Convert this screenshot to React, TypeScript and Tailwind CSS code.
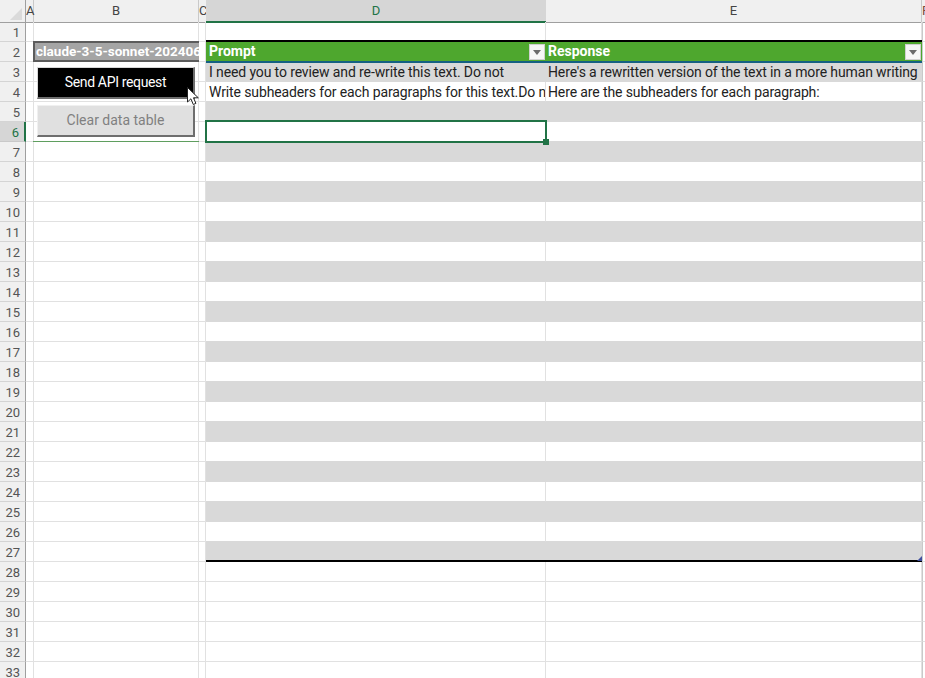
import React from 'react';

const ROW_COUNT = 33;
const FONT = "font-['Roboto',sans-serif]";
const COLS = 'grid grid-cols-[26px_8px_165px_7px_340px_376px_3px]';

const CELL_TEXT: Record<number, [string, string]> = {
  3: ['I need you to review and re-write this text. Do not', "Here's a rewritten version of the text in a more human writing"],
  4: ['Write subheaders for each paragraphs for this text.Do not add anything else', 'Here are the subheaders for each paragraph:'],
};

const FilterButton: React.FC = () => (
  <span className="absolute right-[1px] top-[2px] flex h-[16px] w-[16px] items-center justify-center border border-[#d0d0d0] bg-[#f6f6f6]">
    <svg width="8" height="5" viewBox="0 0 8 5">
      <path d="M0 0h8L4 5z" fill="#6a6a6a" />
    </svg>
  </span>
);

const ColumnHeader: React.FC = () => (
  <div className={`${COLS} h-[22px] bg-[#f0f0f0] text-[13px] leading-[21px] text-[#444]`}>
    <div className="relative border-r border-b border-[#9f9f9f]">
      <svg className="absolute left-[10px] top-[8px]" width="12" height="12" viewBox="0 0 12 12">
        <path d="M12 0v12H0z" fill="#dadada" />
      </svg>
    </div>
    <div className="border-r border-b border-[#c9c9c9] border-b-[#9f9f9f] text-center">A</div>
    <div className="border-r border-b border-[#c9c9c9] border-b-[#9f9f9f] text-center">B</div>
    <div className="border-b border-[#9f9f9f] text-center">C</div>
    <div className="border-b-2 border-[#217346] bg-[#d6d6d6] text-center text-[#217346]">D</div>
    <div className="border-r border-b border-[#c9c9c9] border-b-[#9f9f9f] text-center">E</div>
    <div className="overflow-hidden border-b border-[#9f9f9f] text-[#7b4a3a]">F</div>
  </div>
);

const Row: React.FC<{ n: number }> = ({ n }) => {
  const inTable = n >= 2 && n <= 27;
  const isHead = n === 2;
  const isStriped = inTable && !isHead && n % 2 === 1;
  const isLast = n === 27;
  const selected = n === 6;
  const plain = 'border-r border-b border-[#e1e1e1]';

  let tableCell = plain;
  if (isHead) {
    // one pixel taller than the row, the blue rule sits over the next row
    tableCell = 'relative h-[21px] border-b-2 border-[#156082] bg-[#4ea72e] shadow-[0_-2px_0_#000] text-[14px] leading-[19px] font-bold text-white';
  } else if (isLast) {
    tableCell = 'border-b-2 border-black bg-[#d9d9d9]';
  } else if (isStriped) {
    tableCell = 'border-b border-[#d9d9d9] bg-[#d9d9d9] leading-[21px] tracking-[-0.12px]';
  } else if (inTable) {
    tableCell = 'border-r border-b border-[#e1e1e1] border-b-[#d9d9d9] leading-[21px] tracking-[-0.12px]';
  }

  const text = CELL_TEXT[n];

  return (
    <div className={`${COLS} h-[20px] grid-rows-[20px] text-[14px] text-[#222]`}>
      <div
        className={`border-r border-b pr-[5px] text-right text-[13px] leading-[21px] ${
          selected
            ? 'border-r-2 border-r-[#217346] border-b-[#c9c9c9] bg-[#d6d6d6] text-[#217346]'
            : 'border-r-[#9f9f9f] border-b-[#d4d4d4] bg-[#f0f0f0] text-[#555]'
        }`}
      >
        {n}
      </div>
      <div className={plain} />
      <div className={plain} />
      <div className={plain} />
      <div className={`overflow-hidden whitespace-nowrap pl-[3px] ${tableCell}`}>
        {isHead ? 'Prompt' : text?.[0]}
        {isHead && <FilterButton />}
      </div>
      <div className={`overflow-hidden whitespace-nowrap pl-[2px] ${tableCell}`}>
        {isHead ? 'Response' : text?.[1]}
        {isHead && <FilterButton />}
      </div>
      <div className="border-b border-l border-[#e1e1e1] border-l-[#c9c9c9]" />
    </div>
  );
};

const App: React.FC = () => {
  const rows = Array.from({ length: ROW_COUNT }, (_, i) => i + 1);

  return (
    <div className={`relative h-[678px] w-[925px] overflow-hidden bg-white ${FONT}`}>
      <ColumnHeader />
      {rows.map((n) => (
        <Row key={n} n={n} />
      ))}

      {/* Model name cell */}
      <div className="absolute left-[33px] top-[41px] flex h-[21px] w-[166px] items-center overflow-hidden whitespace-nowrap border-y-2 border-l-2 border-[#5c5c5c] bg-[#a5a5a5] pl-[1px] text-[13.5px] font-bold text-white">
        claude-3-5-sonnet-20240620
      </div>

      {/* Green line under the control block */}
      <div className="absolute left-[33px] top-[141px] h-px w-[166px] bg-[#5f9e5f]" />

      {/* Buttons */}
      <button className="absolute left-[37px] top-[67px] h-[32px] w-[158px] border-t border-r-2 border-b-2 border-l border-t-[#d8d8d8] border-r-[#6e6e6e] border-b-[#6e6e6e] border-l-[#d8d8d8] bg-black text-[14px] tracking-[-0.35px] text-white">
        Send API request
      </button>
      <button className="absolute left-[37px] top-[105px] h-[32px] w-[158px] border-t border-r-2 border-b-2 border-l border-t-[#f0f0f0] border-r-[#6e6e6e] border-b-[#6e6e6e] border-l-[#f0f0f0] bg-[#e0e0e0] text-[14px] text-[#808080]">
        Clear data table
      </button>

      {/* Mouse pointer */}
      <svg className="absolute left-[187px] top-[87px]" width="12" height="19" viewBox="0 0 12 19">
        <path d="M.5.5v14.5l3.4-3.2 2.4 5.7 2.6-1.1-2.4-5.6h4.8z" fill="#fff" stroke="#222" strokeWidth="1" />
      </svg>

      {/* Selected cell */}
      <div className="absolute left-[205px] top-[120px] h-[23px] w-[342px] border-2 border-[#217346]" />
      <div className="absolute left-[543px] top-[139px] h-[6px] w-[6px] bg-[#217346]" />

      {/* Table resize handle */}
      <svg className="absolute left-[917px] top-[556px]" width="5" height="5" viewBox="0 0 5 5">
        <path d="M5 0v5H0z" fill="#3f4f9f" />
      </svg>
    </div>
  );
};

export default App;
